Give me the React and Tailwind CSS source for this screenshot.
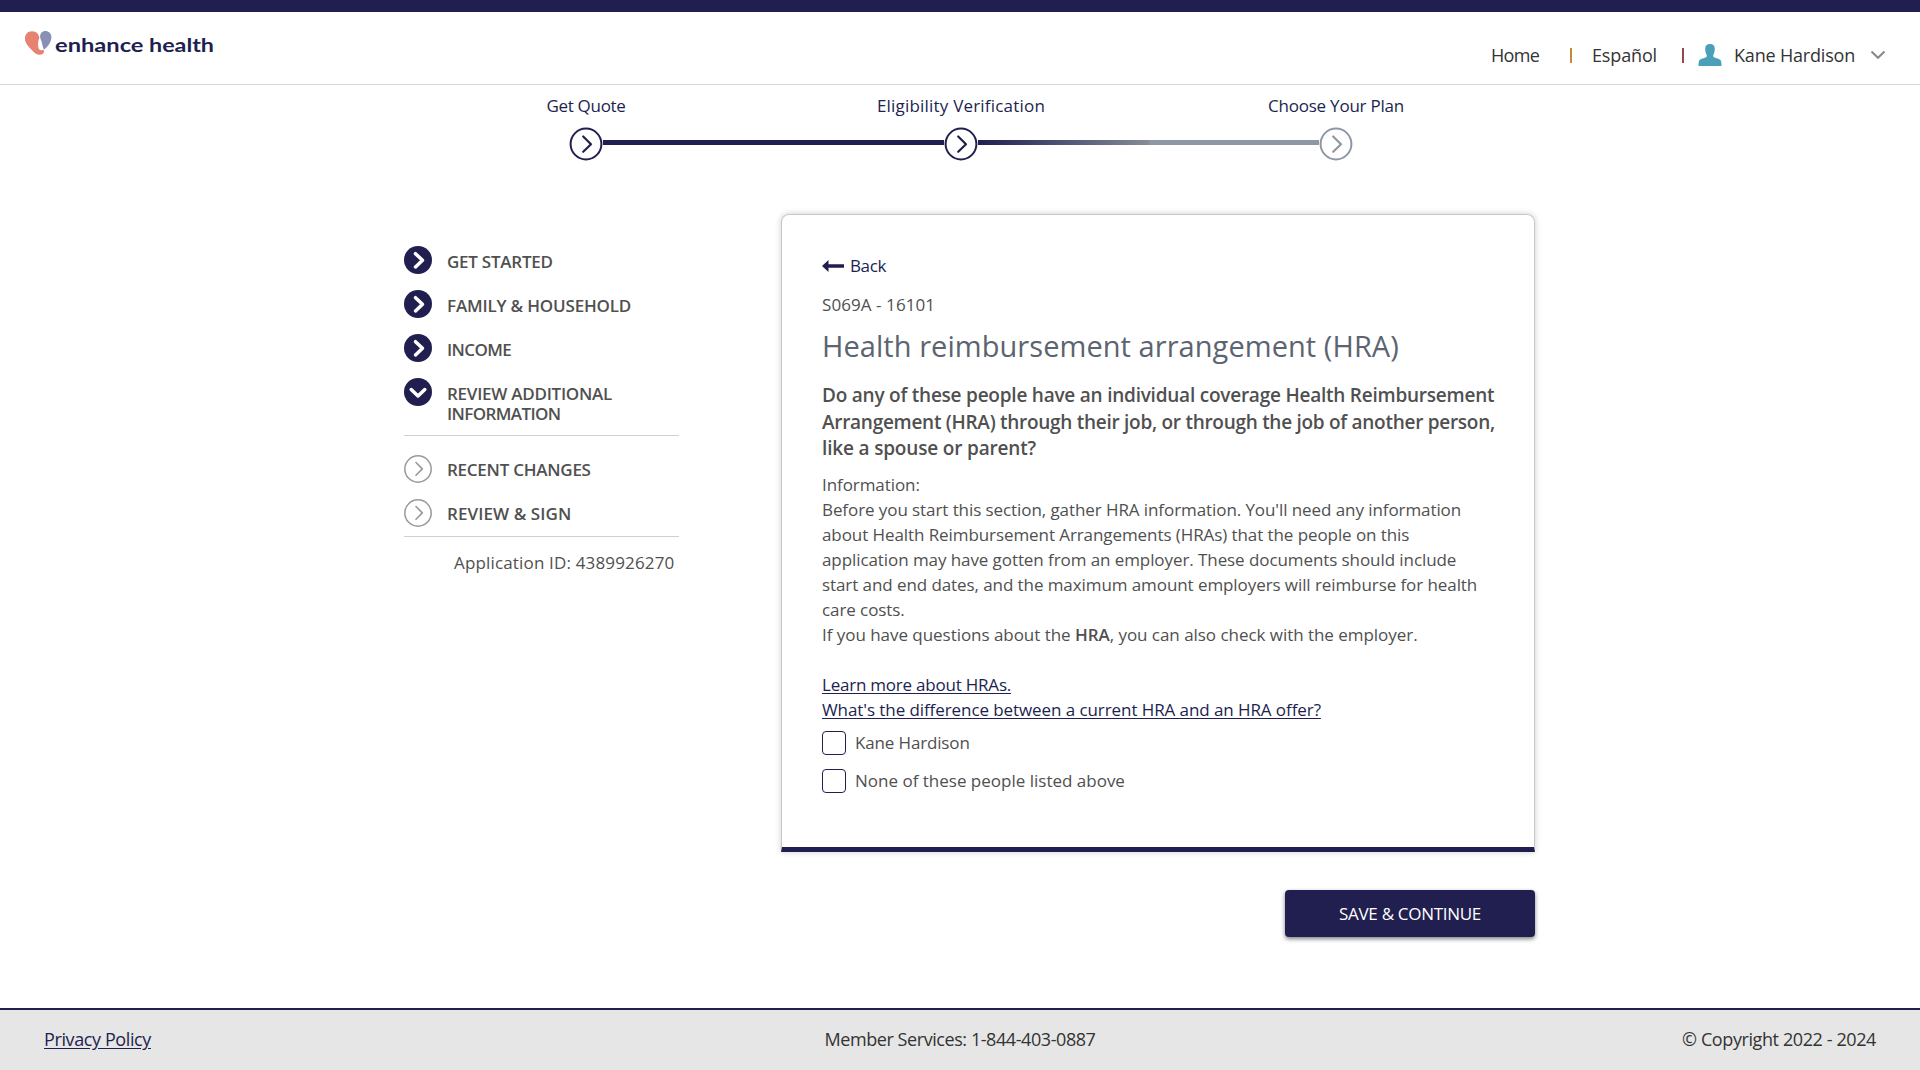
const Logo = () => (
  <svg width="192" height="28" viewBox="24 28 192 28" role="img" aria-label="enhance health">
    <path d="M25 38.5C25 34 28 31.2 31.8 31.2c3.200 0 5.800 1.300 6.900 4.300l.8 2.200c-1.300 2.600-1.800 6.200-1.200 9.200.4 2.300 1.600 3.600 3.300 3.300 1.200-.2 2.300-.1 2.400 1 .1 2-1.800 3.600-4.300 3.600-2.700 0-4.800-1.600-7.700-4.600C28.400 46.600 25 43 25 38.500z" fill="#e58270" />
    <path d="M45.200 31.100c3.600 0 6.200 2.400 6.200 6 0 5.200-3.600 9.600-7.400 12.700-1.100-2.300-1.600-4.700-2.100-7.100-.7-2.800-1.900-4-1.800-6.100.2-3.200 2.100-5.500 5.100-5.500z" fill="#8a90b5" />
    <g fill="#211f4f" fontSize="19.500" fontWeight="700" fontFamily="Lato, sans-serif">
      <text x="55" y="51.500" textLength="88.500" lengthAdjust="spacingAndGlyphs">enhance</text>
      <text x="149" y="51.500" textLength="65" lengthAdjust="spacingAndGlyphs">health</text>
    </g>
  </svg>
);

const PersonIcon = () => (
  <svg width="24" height="22" viewBox="0 0 24 22" aria-hidden="true">
    <path d="M12 0c3.200 0 4.800 1.700 4.800 4.800 0 2.600-.6 4.700-1.500 6v2c.3 1 5.700 1.700 7.100 3.200 1 1.200 1.100 3.200 1.100 6H.5c0-2.800.1-4.800 1.100-6 1.400-1.500 6.800-2.200 7.100-3.200v-2c-.9-1.300-1.500-3.400-1.500-6C7.200 1.700 8.800 0 12 0z" fill="#4a9fb9" />
  </svg>
);

const StepIcon = ({ color }) => (
  <svg className="block" width="34" height="34" viewBox="0 0 34 34" aria-hidden="true">
    <circle cx="17" cy="17" r="15.400" fill="#fff" stroke={color} strokeWidth="2" />
    <path d="M14.200 9.500l7.800 7.700-7.800 7.600" fill="none" stroke={color} strokeWidth="2.200" strokeLinecap="round" strokeLinejoin="round" />
  </svg>
);

const NavIcon = ({ kind }) => (
  <svg className="block shrink-0" width="28" height="28" viewBox="0 0 28 28" aria-hidden="true">
    {kind === "todo" ? (
      <>
        <circle cx="14" cy="14" r="13.200" fill="none" stroke="#999" strokeWidth="1.500" />
        <path d="M12 7.500l6.300 6.400-6.300 6.400" fill="none" stroke="#999" strokeWidth="1.600" strokeLinecap="round" strokeLinejoin="round" />
      </>
    ) : (
      <>
        <circle cx="14" cy="14" r="14" fill="#211f4f" />
        <path d={kind === "open" ? "M7.200 11.500L14 18l6.800-6.500" : "M11.500 7.700l7 6.600-7 6.600"} fill="none" stroke="#fff" strokeWidth="3.500" strokeLinecap="round" strokeLinejoin="round" />
      </>
    )}
  </svg>
);

const Step = ({ label, color, className }) => (
  <div className="flex w-[34px] flex-col items-center">
    <div className={"h-[42px] whitespace-nowrap pt-[9px] text-[17px] leading-6 text-[#211f4f] " + className}>{label}</div>
    <StepIcon color={color} />
  </div>
);

const NavItem = ({ kind, children, className }) => (
  <div className={"flex items-start gap-[15px] " + className}>
    <NavIcon kind={kind} />
    <div className={(kind === "todo" ? "pt-[5px]" : "pt-[6px]") + " text-[17px] font-semibold leading-5"}>{children}</div>
  </div>
);

const Choice = ({ label, className }) => (
  <div className="flex items-start">
    <span className="mr-[9px] block h-6 w-6 rounded-[4px] border border-[#211f4f]" />
    <span className={"leading-6 " + className}>{label}</span>
  </div>
);

export default function App() {
  return (
    <div className="flex h-[1070px] w-full flex-col whitespace-nowrap bg-white font-['Open_Sans','Noto_Sans',sans-serif] text-[17px] text-[#505050] [font-variant-ligatures:none]">
      <header className="flex h-[85px] shrink-0 justify-between border-b border-[#d8d8d8] border-t-[12px] border-t-[#211f4f]">
        <div className="pl-[24px] pt-4">
          <Logo />
        </div>
        <nav className="mt-[28px] flex h-[30px] w-[429px] items-center text-[18px] leading-[30px] text-[#333]">
          <span className="w-[79px] tracking-[-0.7px]">Home</span>
          <span className="mr-[20px] h-[15px] w-[2px] bg-[#c58a3c]" />
          <span className="w-[90px] tracking-[-0.14px]">Español</span>
          <span className="mr-[14px] h-[15px] w-[2px] bg-[#8f4a4a]" />
          <PersonIcon />
          <span className="ml-[12px] w-[136px] tracking-[-0.19px]">Kane Hardison</span>
          <svg width="16" height="10" viewBox="0 0 16 10" aria-hidden="true">
            <path d="M1.500 1.500L8 7.800l6.500-6.300" fill="none" stroke="#888" strokeWidth="2" />
          </svg>
        </nav>
      </header>

      <div className="flex h-[77px] shrink-0 items-start justify-center pl-[2px]">
        <Step label="Get Quote" color="#211f4f" className="tracking-[-0.32px]" />
        <div className="mt-[55px] h-[5px] w-[341px] bg-[#211f4f]" />
        <Step label="Eligibility Verification" color="#211f4f" className="tracking-[0.2px]" />
        <div className="mt-[55px] h-[5px] w-[171px] bg-linear-to-r from-[#211f4f] to-[#868d96]" />
        <div className="mt-[55px] h-[5px] w-[170px] bg-[#8e98a4]" />
        <Step label="Choose Your Plan" color="#8e98a4" className="tracking-[-0.22px]" />
      </div>

      <div className="flex grow items-start pl-[404px]">
        <aside className="mt-[84px] w-[275px]">
          <div className="flex flex-col gap-[16px] border-b border-[#d0d0d0] pb-[11px]">
            <NavItem kind="done" className="tracking-[-0.25px]">GET STARTED</NavItem>
            <NavItem kind="done" className="tracking-[-0.18px]">FAMILY &amp; HOUSEHOLD</NavItem>
            <NavItem kind="done" className="tracking-[-0.6px]">INCOME</NavItem>
            <NavItem kind="open" className="">
              <div className="tracking-[-0.26px]">REVIEW ADDITIONAL</div>
              <div className="tracking-[-0.6px]">INFORMATION</div>
            </NavItem>
          </div>
          <div className="flex flex-col gap-[16px] border-b border-[#d0d0d0] pb-[9px] pt-[19px]">
            <NavItem kind="todo" className="tracking-[-0.25px]">RECENT CHANGES</NavItem>
            <NavItem kind="todo" className="tracking-[0.08px]">REVIEW &amp; SIGN</NavItem>
          </div>
          <div className="mt-[14px] pl-[50px] leading-6 tracking-[0.16px]">Application ID: 4389926270</div>
        </aside>

        <main className="ml-[102px] mt-[52px] w-[754px]">
          <section className="h-[638px] rounded-t-[8px] border border-b-[5px] border-[#c8c8c8] border-b-[#211f4f] px-[40px] pt-[39px] shadow-[0_0_6px_rgba(0,0,0,0.2)]">
            <div className="flex h-6 items-center gap-[5px] leading-6 tracking-[-0.37px] text-[#211f4f]">
              <svg width="23" height="12" viewBox="0 0 23 12" aria-hidden="true">
                <path d="M0 6L6.500 0v4.300H22v3.400H6.500V12z" fill="#211f4f" />
              </svg>
              Back
            </div>
            <div className="mt-[15px] leading-6 tracking-[0.07px]">S069A - 16101</div>
            <h1 className="mt-[9px] text-[29px] leading-10 tracking-[0.06px] text-[#5b6470]">Health reimbursement arrangement (HRA)</h1>
            <h2 className="mt-[16px] text-[19px] font-semibold leading-[26.500px]">
              <div className="tracking-[-0.23px]">Do any of these people have an individual coverage Health Reimbursement</div>
              <div className="tracking-[-0.28px]">Arrangement (HRA) through their job, or through the job of another person,</div>
              <div className="tracking-[-0.17px]">like a spouse or parent?</div>
            </h2>
            <div className="mt-[10px] leading-[25px] tracking-[-0.08px]">
              <div>Information:</div>
              <div>Before you start this section, gather HRA information. You'll need any information</div>
              <div>about Health Reimbursement Arrangements (HRAs) that the people on this</div>
              <div>application may have gotten from an employer. These documents should include</div>
              <div>start and end dates, and the maximum amount employers will reimburse for health</div>
              <div>care costs.</div>
              <div className="tracking-[-0.04px]">If you have questions about the <b className="font-semibold">HRA</b>, you can also check with the employer.</div>
            </div>
            <div className="mt-[25px] leading-[25px] text-[#211f4f]">
              <div><a className="tracking-[-0.22px] underline underline-offset-2">Learn more about HRAs.</a></div>
              <div><a className="tracking-[-0.08px] underline underline-offset-2">What's the difference between a current HRA and an HRA offer?</a></div>
            </div>
            <div className="mt-[9px] flex flex-col gap-[14px]">
              <Choice label="Kane Hardison" className="tracking-[-0.15px]" />
              <Choice label="None of these people listed above" className="tracking-[0px]" />
            </div>
          </section>
          <div className="mt-[38px] flex justify-end">
            <button className="h-[47px] w-[250px] rounded-[4px] bg-[#211f4f] tracking-[-0.3px] text-white shadow-[0_2px_4px_rgba(0,0,0,0.5)]">SAVE &amp; CONTINUE</button>
          </div>
        </main>
      </div>

      <footer className="grid h-[62px] shrink-0 grid-cols-3 border-t-2 border-[#211f4f] bg-[#e6e6e6] px-[44px] pt-[15px] text-[18px] leading-[28px] text-[#333]">
        <a className="tracking-[-0.39px] text-[#211f4f] underline underline-offset-2">Privacy Policy</a>
        <span className="text-center tracking-[-0.43px]">Member Services: 1-844-403-0887</span>
        <span className="text-right tracking-[-0.4px]">© Copyright 2022 - 2024</span>
      </footer>
    </div>
  );
}
